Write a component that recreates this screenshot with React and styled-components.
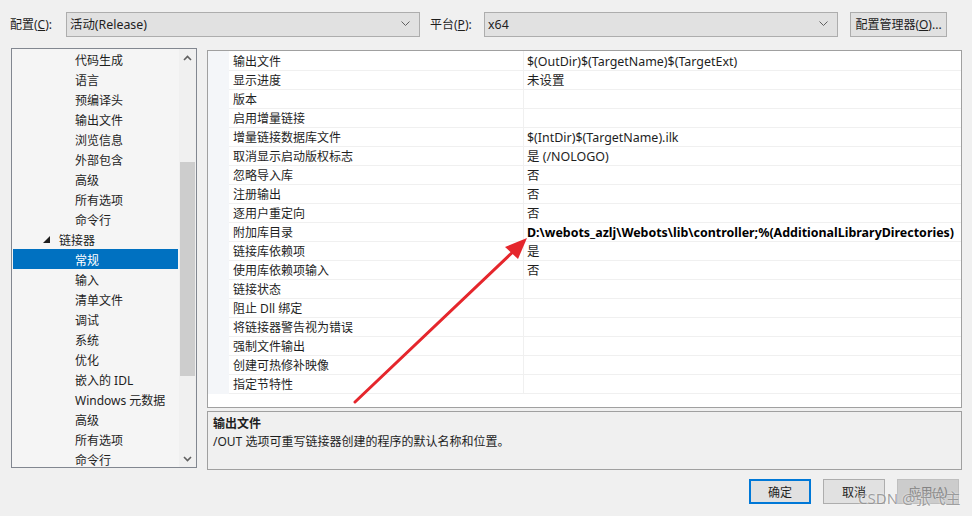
import React from "react";
import styled, { createGlobalStyle } from "styled-components";

const GlobalStyle = createGlobalStyle`
  html, body {
    margin: 0;
    padding: 0;
    background: #f0f0f0;
  }
  * {
    box-sizing: border-box;
  }
`;

const FONT = `"Segoe UI", "Noto Sans", "Noto Sans CJK SC", sans-serif`;

const treeItems = [
  { label: "代码生成" },
  { label: "语言" },
  { label: "预编译头" },
  { label: "输出文件" },
  { label: "浏览信息" },
  { label: "外部包含" },
  { label: "高级" },
  { label: "所有选项" },
  { label: "命令行" },
  { label: "链接器", parent: true },
  { label: "常规", selected: true },
  { label: "输入" },
  { label: "清单文件" },
  { label: "调试" },
  { label: "系统" },
  { label: "优化" },
  { label: "嵌入的 IDL" },
  { label: "Windows 元数据" },
  { label: "高级" },
  { label: "所有选项" },
  { label: "命令行" },
];

const props = [
  ["输出文件", "$(OutDir)$(TargetName)$(TargetExt)"],
  ["显示进度", "未设置"],
  ["版本", ""],
  ["启用增量链接", ""],
  ["增量链接数据库文件", "$(IntDir)$(TargetName).ilk"],
  ["取消显示启动版权标志", "是 (/NOLOGO)"],
  ["忽略导入库", "否"],
  ["注册输出", "否"],
  ["逐用户重定向", "否"],
  ["附加库目录", "D:\\webots_azlj\\Webots\\lib\\controller;%(AdditionalLibraryDirectories)", true],
  ["链接库依赖项", "是"],
  ["使用库依赖项输入", "否"],
  ["链接状态", ""],
  ["阻止 Dll 绑定", ""],
  ["将链接器警告视为错误", ""],
  ["强制文件输出", ""],
  ["创建可热修补映像", ""],
  ["指定节特性", ""],
];

function Chevron({ up }) {
  return (
    <svg width="9" height="6" viewBox="0 0 9 6">
      <polyline
        points={up ? "1,5 4.5,1.5 8,5" : "1,1 4.5,4.5 8,1"}
        fill="none"
        stroke="#606060"
        strokeWidth="1.6"
      />
    </svg>
  );
}

function App() {
  return (
    <>
      <GlobalStyle />
      <Page>
        <TopBar>
          <Label $w={56}>
            配置(<u>C</u>):
          </Label>
          <Combo>
            <span>活动(Release)</span>
            <ComboArrow viewBox="0 0 9 6">
              <polyline points="0.5,0.5 4.5,4.5 8.5,0.5" fill="none" stroke="#606060" strokeWidth="1" />
            </ComboArrow>
          </Combo>
          <Label $w={54} $ml={10}>
            平台(<u>P</u>):
          </Label>
          <Combo>
            <span>x64</span>
            <ComboArrow viewBox="0 0 9 6">
              <polyline points="0.5,0.5 4.5,4.5 8.5,0.5" fill="none" stroke="#606060" strokeWidth="1" />
            </ComboArrow>
          </Combo>
          <ManagerButton>
            配置管理器(<u>O</u>)...
          </ManagerButton>
        </TopBar>

        <Main>
          <Tree>
            <TreeList>
              {treeItems.map((it, i) => (
                <TreeRow key={i} $selected={it.selected} $parent={it.parent}>
                  {it.parent && (
                    <Expander viewBox="0 0 7 7">
                      <polygon points="7,0 7,7 0,7" fill="#1e1e1e" />
                    </Expander>
                  )}
                  {it.label}
                </TreeRow>
              ))}
            </TreeList>
            <ScrollBar>
              <ScrollButton>
                <Chevron up />
              </ScrollButton>
              <ScrollTrack>
                <ScrollThumb />
              </ScrollTrack>
              <ScrollButton>
                <Chevron />
              </ScrollButton>
            </ScrollBar>
          </Tree>

          <RightColumn>
            <Grid>
              {props.map(([name, value, bold], i) => (
                <PropRow key={i}>
                  <Margin />
                  <NameCell>{name}</NameCell>
                  <ValueCell $bold={bold}>{value}</ValueCell>
                </PropRow>
              ))}
            </Grid>
            <Description>
              <DescTitle>输出文件</DescTitle>
              <DescText>/OUT 选项可重写链接器创建的程序的默认名称和位置。</DescText>
            </Description>
          </RightColumn>
        </Main>

        <Footer>
          <DialogButton $primary>确定</DialogButton>
          <DialogButton>取消</DialogButton>
          <DialogButton $disabled>
            应用(<u>A</u>)
          </DialogButton>
        </Footer>

        <Arrow viewBox="0 0 972 516">
          <line x1="355" y1="402" x2="518" y2="247" stroke="#e5262c" strokeWidth="3" strokeLinecap="round" />
          <polygon points="527,238 505,247 518,259" fill="#e5262c" />
        </Arrow>
        <Watermark>CSDN @张飞主</Watermark>
      </Page>
    </>
  );
}

export default App;

const Page = styled.div`
  position: relative;
  width: 972px;
  height: 516px;
  overflow: hidden;
  background: #f0f0f0;
  font-family: ${FONT};
  font-size: 12px;
  color: #1e1e1e;
`;

const TopBar = styled.div`
  display: flex;
  align-items: center;
  height: 48px;
  padding-left: 10px;
`;

const Label = styled.div`
  width: ${(p) => p.$w}px;
  margin-left: ${(p) => p.$ml || 0}px;
  white-space: nowrap;
`;

const Combo = styled.div`
  width: 354px;
  height: 25px;
  display: flex;
  align-items: center;
  justify-content: space-between;
  padding: 0 9px 0 3px;
  background: #e1e1e1;
  border: 1px solid #adadad;
  font-size: 12.4px;
`;

const ComboArrow = styled.svg`
  width: 9px;
  height: 6px;
`;

const ManagerButton = styled.div`
  margin-left: 12px;
  width: 97px;
  height: 25px;
  display: flex;
  align-items: center;
  justify-content: center;
  background: #e1e1e1;
  border: 1px solid #adadad;
  white-space: nowrap;
`;

const Main = styled.div`
  display: flex;
  align-items: flex-start;
  padding-left: 11px;
  gap: 10px;
`;

const Tree = styled.div`
  width: 186px;
  height: 420px;
  display: flex;
  border: 1px solid #828790;
  background: #f5f5f5;
  overflow: hidden;
`;

const TreeList = styled.div`
  flex: 1;
  padding: 0 1px;
  overflow: hidden;
`;

const TreeRow = styled.div`
  height: 20px;
  display: flex;
  align-items: center;
  padding-top: 1px;
  padding-left: ${(p) => (p.$parent ? 28 : 62)}px;
  white-space: nowrap;
  background: ${(p) => (p.$selected ? "#0071c1" : "transparent")};
  color: ${(p) => (p.$selected ? "#ffffff" : "#1e1e1e")};
`;

const Expander = styled.svg`
  width: 7px;
  height: 7px;
  margin-left: 2px;
  margin-right: 9px;
`;

const ScrollBar = styled.div`
  width: 17px;
  display: flex;
  flex-direction: column;
  background: #f0f0f0;
`;

const ScrollButton = styled.div`
  height: 17px;
  display: flex;
  align-items: center;
  justify-content: center;
`;

const ScrollTrack = styled.div`
  flex: 1;
  padding: 96px 1px 74px 1px;
  display: flex;
`;

const ScrollThumb = styled.div`
  flex: 1;
  background: #cdcdcd;
`;

const RightColumn = styled.div`
  width: 755px;
  margin-top: 2px;
  display: flex;
  flex-direction: column;
  gap: 3px;
`;

const Grid = styled.div`
  height: 358px;
  border: 1px solid #a0a0a0;
  background: #ffffff;
`;

const PropRow = styled.div`
  display: grid;
  grid-template-columns: 21px 295px 1fr;
  height: 19px;
`;

const Margin = styled.div`
  background: #f4f6f9;
`;

const NameCell = styled.div`
  display: flex;
  align-items: center;
  padding: 1px 0 0 4px;
  border-bottom: 1px solid #f0f0f0;
  border-right: 1px solid #f0f0f0;
  white-space: nowrap;
`;

const ValueCell = styled.div`
  display: flex;
  align-items: center;
  padding: 1px 0 0 3px;
  border-bottom: 1px solid #f0f0f0;
  white-space: nowrap;
  overflow: hidden;
  font-size: 12.45px;
  font-weight: ${(p) => (p.$bold ? 700 : 400)};
  color: ${(p) => (p.$bold ? "#000000" : "#1e1e1e")};
`;

const Description = styled.div`
  height: 59px;
  border: 1px solid #a0a0a0;
  background: #f0f0f0;
  padding: 3px 5px;
  line-height: 18px;
`;

const DescTitle = styled.div`
  font-weight: 700;
`;

const DescText = styled.div``;

const Footer = styled.div`
  display: flex;
  justify-content: flex-end;
  gap: 12px;
  padding: 9px 13px 0 0;
`;

const DialogButton = styled.div`
  width: 62px;
  height: 25px;
  display: flex;
  align-items: center;
  justify-content: center;
  background: ${(p) => (p.$disabled ? "#cccccc" : "#e1e1e1")};
  border: ${(p) => (p.$primary ? "2px solid #0078d7" : p.$disabled ? "1px solid #bfbfbf" : "1px solid #adadad")};
  color: ${(p) => (p.$disabled ? "#838383" : "#1e1e1e")};
`;

const Arrow = styled.svg`
  position: absolute;
  left: 0;
  top: 0;
  width: 972px;
  height: 516px;
  pointer-events: none;
`;

const Watermark = styled.div`
  position: absolute;
  left: 858px;
  top: 487px;
  font-family: "Noto Sans", "Noto Sans CJK SC", sans-serif;
  font-size: 15px;
  color: rgba(130, 130, 130, 0.75);
  text-shadow: 0 0 2px rgba(255, 255, 255, 0.9);
  pointer-events: none;
  white-space: nowrap;
`;
